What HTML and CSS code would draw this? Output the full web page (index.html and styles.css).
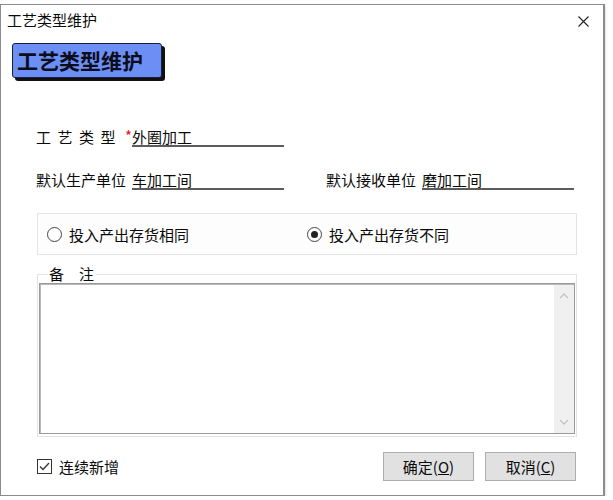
FILE: index.html
```html
<!DOCTYPE html>
<html lang="zh-CN">
  <head>
    <meta charset="UTF-8" />
    <meta name="viewport" content="width=device-width, initial-scale=1.0" />
    <title>工艺类型维护</title>
    <link rel="stylesheet" href="styles.css">
  </head>
  <body>
    <div class="window">
      <div class="titleBar">
        <span class="titleText">工艺类型维护</span>
        <svg class="closeIcon" width="11" height="11" viewBox="0 0 11 11">
          <path d="M0.5 0.5 L10.5 10.5 M10.5 0.5 L0.5 10.5" stroke="#222" stroke-width="1.1" fill="none" />
        </svg>
      </div>

      <div class="badge">工艺类型维护</div>

      <div class="formRow firstRow">
        <div class="field">
          <span class="label spaced">工艺类型</span>
          <span class="value"><span class="required">*</span>外圈加工</span>
        </div>
      </div>

      <div class="formRow">
        <div class="field">
          <span class="label">默认生产单位</span>
          <span class="value">车加工间</span>
        </div>
        <div class="field">
          <span class="label">默认接收单位</span>
          <span class="value">磨加工间</span>
        </div>
      </div>

      <div class="radioBox">
        <div class="radioItem">
          <span class="radio"></span>
          <span>投入产出存货相同</span>
        </div>
        <div class="radioItem">
          <span class="radio checked"></span>
          <span>投入产出存货不同</span>
        </div>
      </div>

      <fieldset class="memoGroup">
        <legend><span class="legendWord">备</span>注</legend>
        <div class="memo">
          <div class="memoText"></div>
          <div class="scrollBar">
            <svg width="10" height="6" viewBox="0 0 10 6">
              <path d="M1 5 L5 1 L9 5" stroke="#c4c4c4" stroke-width="1.3" fill="none" />
            </svg>
            <svg width="10" height="6" viewBox="0 0 10 6">
              <path d="M1 1 L5 5 L9 1" stroke="#c4c4c4" stroke-width="1.3" fill="none" />
            </svg>
          </div>
        </div>
      </fieldset>

      <div class="footer">
        <div class="checkItem">
          <svg class="checkBox" width="15" height="15" viewBox="0 0 15 15">
            <rect x="0.5" y="0.5" width="14" height="14" fill="#fff" stroke="#333" />
            <path d="M3 7.5 L6 10.5 L12 4" stroke="#333" stroke-width="1.3" fill="none" />
          </svg>
          <span>连续新增</span>
        </div>
        <div class="buttons">
          <button>确定(<u>O</u>)</button>
          <button>取消(<u>C</u>)</button>
        </div>
      </div>
    </div>
  </body>
</html>
```

FILE: styles.css
```css
body {
  margin: 0;
  background: #fff;
  font-family: "Noto Sans CJK SC", "Liberation Sans", sans-serif;
  font-size: 15px;
  color: #0a0a0a;
}

.window {
  margin-top: 4px;
  width: 605px;
  height: 492px;
  box-sizing: border-box;
  border: 1px solid #8c8c8c;
  border-right-width: 2px;
  border-left-width: 1px;
  background: #fff;
  box-shadow: 0 2px 3px #cfcfcf;
}

.titleBar {
  display: flex;
  justify-content: space-between;
  align-items: flex-start;
  height: 38px;
  box-sizing: border-box;
  padding: 5px 14px 0 6px;
  line-height: 20px;
}

.closeIcon {
  margin-top: 6px;
}

.badge {
  display: inline-block;
  margin-left: 11px;
  height: 35px;
  box-sizing: border-box;
  padding: 0 18px 0 4px;
  line-height: 32px;
  font-size: 21px;
  font-weight: bold;
  color: #0c0c1a;
  background: #6b8ff5;
  border: 1px solid #1b1d3a;
  border-radius: 3px;
  box-shadow: 3px 3px 0 #111;
}

.formRow {
  display: flex;
  gap: 42px;
  padding-left: 35px;
  margin-top: 25px;
}

.firstRow {
  margin-top: 51px;
}

.field {
  display: flex;
  line-height: 16px;
}

.label {
  width: 96px;
  white-space: nowrap;
}

.spaced {
  letter-spacing: 6.5px;
}

.value {
  position: relative;
  width: 152px;
  border-bottom: 2px solid #5c5c5c;
}

.required {
  position: absolute;
  left: -7px;
  top: -1px;
  color: #e0141e;
}

.radioBox {
  display: flex;
  margin: 23px 0 0 36px;
  width: 540px;
  height: 42px;
  box-sizing: border-box;
  border: 1px solid #e4e4e4;
  background: #fdfdfd;
  align-items: center;
  padding-left: 9px;
}

.radioItem {
  display: flex;
  align-items: center;
  gap: 7px;
  width: 260px;
}

.radio {
  width: 15px;
  height: 15px;
  box-sizing: border-box;
  border: 1px solid #444;
  border-radius: 50%;
  background: #fff;
  position: relative;
}

.radio.checked::after {
  content: "";
  position: absolute;
  left: 3px;
  top: 3px;
  width: 7px;
  height: 7px;
  border-radius: 50%;
  background: #222;
}

.memoGroup {
  margin: 11px 0 0 36px;
  width: 540px;
  box-sizing: border-box;
  padding: 1px 1px 2px 1px;
  border: 1px solid #e4e4e4;
}

.memoGroup legend {
  padding: 0 1px;
  margin-left: 9px;
  line-height: 16px;
}

.legendWord {
  margin-right: 15px;
}

.memo {
  display: flex;
  height: 151px;
  box-sizing: border-box;
  border: 1px solid #9a9a9a;
  box-shadow: inset 1px 1px 0 #b8b8b8;
  background: #fff;
}

.memoText {
  flex: 1;
}

.scrollBar {
  width: 20px;
  margin: 1px 0 0;
  background: #f0f0f0;
  display: flex;
  flex-direction: column;
  justify-content: space-between;
  align-items: center;
  padding: 8px 0 8px;
}

.footer {
  display: flex;
  justify-content: space-between;
  align-items: center;
  margin-top: 15px;
  padding: 0 27px 0 36px;
}

.checkItem {
  display: flex;
  align-items: center;
  gap: 7px;
}

.buttons {
  display: flex;
  gap: 11px;
}

button {
  width: 91px;
  height: 29px;
  border: 1px solid #adadad;
  background: #e1e1e1;
  font-family: "Noto Sans CJK SC", "Liberation Sans", sans-serif;
  font-size: 15px;
  color: #0a0a0a;
  padding: 0;
}
```
